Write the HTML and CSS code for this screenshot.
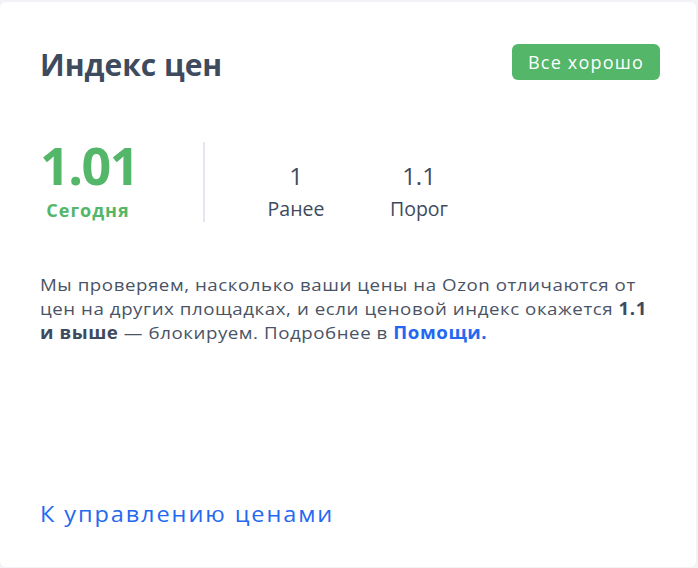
FILE: index.html
```html
<!DOCTYPE html>
<html lang="ru">
<head>
<meta charset="utf-8">
<link rel="stylesheet" href="styles.css">
</head>
<body>
<div class="card">
  <div class="header">
    <h1 class="title">Индекс цен</h1>
    <span class="badge">Все хорошо</span>
  </div>
  <div class="stats">
    <div class="today">
      <div class="today-value">1.01</div>
      <div class="today-label">Сегодня</div>
    </div>
    <div class="divider"></div>
    <div class="stat">
      <div class="stat-value">1</div>
      <div class="stat-label">Ранее</div>
    </div>
    <div class="stat">
      <div class="stat-value">1.1</div>
      <div class="stat-label">Порог</div>
    </div>
  </div>
  <p class="desc">Мы проверяем, насколько ваши цены на Ozon отличаются от цен на других площадках, и если ценовой индекс окажется <b>1.1 и выше</b> — блокируем. Подробнее в <a class="help" href="#">Помощи.</a></p>
  <div class="footer">
    <a class="manage" href="#">К управлению ценами</a>
  </div>
</div>
</body>
</html>
```

FILE: styles.css
```css
html, body {
  margin: 0;
  padding: 0;
}
body {
  background: #f2f3f6;
  font-family: "Open Sans", "Noto Sans", sans-serif;
  width: 698px;
  height: 568px;
  overflow: hidden;
}
.card {
  box-sizing: border-box;
  margin-top: 2px;
  width: 696px;
  height: 565px;
  background: #fff;
  border-radius: 6px;
  padding: 42px 36px 0 40px;
  display: flex;
  flex-direction: column;
}
.header {
  display: flex;
  justify-content: space-between;
  align-items: flex-start;
}
.title {
  margin: 3px 0 0;
  font-size: 30px;
  line-height: 36px;
  font-weight: 700;
  color: #3e4a5e;
}
.badge {
  box-sizing: border-box;
  height: 36px;
  width: 148px;
  display: flex;
  align-items: center;
  justify-content: center;
  background: #53b668;
  color: #fff;
  font-size: 18px;
  border-radius: 6px;
  letter-spacing: 1.2px;
}
.stats {
  display: flex;
  align-items: stretch;
  margin-top: 59px;
}
.today {
  width: 96px;
  text-align: center;
  color: #53b668;
  font-weight: 700;
}
.today-value {
  font-size: 52px;
  line-height: 46px;
  letter-spacing: -1.5px;
}
.today-label {
  font-size: 18px;
  line-height: 24px;
  margin-top: 10px;
  letter-spacing: 1px;
}
.divider {
  width: 2px;
  background: #e3e6ec;
  margin: 0 41px 0 67px;
}
.stat {
  width: 100px;
  margin-right: 23px;
  text-align: center;
  color: #3e4a5e;
  display: flex;
  flex-direction: column;
  justify-content: flex-end;
}
.stat-value {
  font-size: 24px;
  line-height: 30px;
}
.stat-label {
  font-size: 19.5px;
  line-height: 26px;
  margin-top: 5px;
}
.desc {
  width: 563px;
  margin: 51px 0 0;
  font-size: 17px;
  line-height: 24px;
  letter-spacing: 0.5px;
  color: #4a5365;
  transform: scaleX(1.1);
  transform-origin: left top;
}
.desc b {
  color: #3e4a5e;
}
.help {
  color: #2468f2;
  font-weight: 700;
  text-decoration: none;
}
.footer {
  margin-top: auto;
  margin-bottom: 38px;
}
.manage {
  display: inline-block;
  font-size: 21px;
  line-height: 30px;
  letter-spacing: 1.7px;
  color: #2468f2;
  text-decoration: none;
  transform: scaleX(1.12);
  transform-origin: left top;
}
```
